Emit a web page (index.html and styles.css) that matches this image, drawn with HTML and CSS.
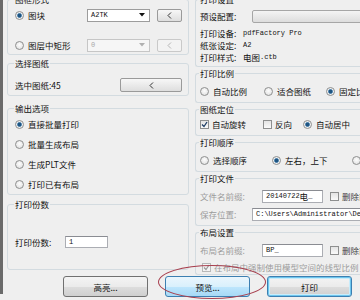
FILE: index.html
```html
<!DOCTYPE html>
<html lang="zh-CN">
<head>
  <meta charset="UTF-8" />
  <title>批量打印</title>
  <link rel="stylesheet" href="styles.css">
</head>
<body>
  <div class="dialog">
    <div class="panes">
      <!-- 左侧 -->
      <div class="pane">
        <fieldset class="grp b1">
          <legend>图框形式</legend>
          <div class="row">
            <span class="opt w72"><i class="radio on"></i>图块</span>
            <span class="combo"><span class="mono">A2TK</span><svg class="arrow" width="6" height="4" viewBox="0 0 6 4"><path d="M0 0H6L3 3.5Z" fill="#111"/></svg></span>
            <button class="pick"><svg width="5" height="7" viewBox="0 0 5 7"><path d="M4 .5 1 3.5 4 6.5" fill="none" stroke="#333"/></svg></button>
          </div>
          <div class="row next">
            <span class="opt w72"><i class="radio"></i>图层中矩形</span>
            <span class="combo off"><span class="mono">0</span><svg class="arrow" width="6" height="4" viewBox="0 0 6 4"><path d="M0 0H6L3 3.5Z" fill="#b0b0b0"/></svg></span>
            <button class="pick off"><svg width="5" height="7" viewBox="0 0 5 7"><path d="M4 .5 1 3.5 4 6.5" fill="none" stroke="#b5b5b5"/></svg></button>
          </div>
        </fieldset>

        <fieldset class="grp b2">
          <legend>选择图纸</legend>
          <div class="row">
            <span>选中图纸:45</span>
            <button class="pick wide"><svg width="5" height="7" viewBox="0 0 5 7"><path d="M4 .5 1 3.5 4 6.5" fill="none" stroke="#333"/></svg></button>
          </div>
        </fieldset>

        <fieldset class="grp b3">
          <legend>输出选项</legend>
          <div class="row tall"><span class="opt"><i class="radio on"></i>直接批量打印</span></div>
          <div class="row tall"><span class="opt"><i class="radio"></i>批量生成布局</span></div>
          <div class="row tall"><span class="opt"><i class="radio"></i>生成PLT文件</span></div>
          <div class="row tall"><span class="opt"><i class="radio"></i>打印已有布局</span></div>
        </fieldset>

        <fieldset class="grp b4">
          <legend>打印份数</legend>
          <div class="row">
            <span class="lbl w50">打印份数:</span>
            <span class="field copies"><span class="mono">1</span></span>
          </div>
        </fieldset>
      </div>

      <!-- 右侧 -->
      <div class="pane">
        <fieldset class="grp r r1">
          <legend>打印设置</legend>
          <div class="row">
            <span class="lbl w52">预设配置:</span>
            <span class="preset"></span>
          </div>
          <div class="info first"><span class="lbl w43">打印设备:</span><span class="mono">pdfFactory Pro</span></div>
          <div class="info"><span class="lbl w43">纸张设定:</span><span class="mono">A2</span></div>
          <div class="info"><span class="lbl w43">打印样式:</span>电图<span class="mono">.ctb</span></div>
        </fieldset>

        <fieldset class="grp r r2">
          <legend>打印比例</legend>
          <div class="row">
            <span class="opt w64"><i class="radio"></i>自动比例</span>
            <span class="opt w62"><i class="radio"></i>适合图纸</span>
            <span class="opt"><i class="radio on"></i>固定比例</span>
          </div>
        </fieldset>

        <fieldset class="grp r r3">
          <legend>图纸定位</legend>
          <div class="row short">
            <span class="opt w63"><i class="check"><svg width="7" height="7" viewBox="0 0 7 7"><path d="M1 3.5 3 5.5 6 1" fill="none" stroke="#1f3f66" stroke-width="1.3"/></svg></i>自动旋转</span>
            <span class="opt w40"><i class="check"></i>反向</span>
            <span class="opt"><i class="radio on"></i>自动居中</span>
          </div>
        </fieldset>

        <fieldset class="grp r r4">
          <legend>打印顺序</legend>
          <div class="row short">
            <span class="opt w72"><i class="radio"></i>选择顺序</span>
            <span class="opt w80"><i class="radio on"></i>左右，上下</span>
            <span class="opt"><i class="radio"></i>上下，左右</span>
          </div>
        </fieldset>

        <fieldset class="grp r r5">
          <legend>打印文件</legend>
          <div class="row">
            <span class="lbl w62 dim">文件名前缀:</span>
            <span class="field prefix"><span class="mono">20140722</span>电<span class="mono">_</span></span>
            <span class="opt del"><i class="check"></i>删除前缀</span>
          </div>
          <div class="row next">
            <span class="lbl w52 dim">保存位置:</span>
            <span class="field path"><span class="mono">C:\Users\Administrator\Desktop</span></span>
          </div>
        </fieldset>

        <fieldset class="grp r r6">
          <legend>布局设置</legend>
          <div class="row">
            <span class="lbl w62 dim">布局名前缀:</span>
            <span class="field prefix"><span class="mono">BP_</span></span>
            <span class="opt del"><i class="check"></i>删除前缀</span>
          </div>
          <div class="info last">
            <span class="opt dim"><i class="check off"><svg width="7" height="7" viewBox="0 0 7 7"><path d="M1 3.5 3 5.5 6 1" fill="none" stroke="#9a9a9a" stroke-width="1.2"/></svg></i>在布局中强制使用模型空间的线型比例</span>
          </div>
        </fieldset>
      </div>
    </div>

    <div class="actions">
      <button class="btn">高亮...</button>
      <button class="btn hover">预览...</button>
      <button class="btn default">打印</button>
    </div>

    <div class="mark"></div>
  </div>
</body>
</html>
```

FILE: styles.css
```css
html, body {
  margin: 0;
  width: 360px;
  height: 300px;
  overflow: hidden;
}
body {
  background: #efefef;
  font-family: "Noto Sans CJK SC", sans-serif;
  font-size: 8.5px;
  color: #111;
}
.dialog {
  position: relative;
  width: 470px;
  height: 300px;
  padding-left: 4px;
  border-left: 3px solid #6a6a6a;
}
.panes {
  display: grid;
  grid-template-columns: 182px 240px;
  column-gap: 6px;
  align-items: start;
  margin-top: -6px;
}
.pane {
  display: flex;
  flex-direction: column;
}
.mono {
  font-family: "Liberation Mono", "Noto Sans CJK SC", monospace;
  font-size: 7px;
}

/* group boxes */
.grp {
  margin: 0;
  min-width: 0;
  border: 1px solid #d3dbe0;
  border-radius: 3px;
  padding: 0 6px 0 7px;
}
.grp.r {
  padding-left: 4px;
  padding-right: 0;
  border-right: none;
}
.grp legend {
  padding: 0 1px;
  margin-left: -1px;
  height: 10px;
  line-height: 10px;
}
.b1 { padding-top: 3px; padding-bottom: 1px; }
.b2 { margin-top: 3px; padding-top: 9px; padding-bottom: 2px; }
.b3 { margin-top: 7px; padding-top: 1px; padding-bottom: 0; }
.b4 { margin-top: 4px; padding-top: 25px; padding-bottom: 19px; }
.r1 { padding-top: 4px; padding-bottom: 3px; }
.r2 { margin-top: 1px; padding-top: 5px; padding-bottom: 3px; }
.r3 { margin-top: 1px; padding-top: 3px; padding-bottom: 4px; }
.r4 { margin-top: 1px; padding-top: 6px; padding-bottom: 4px; }
.r5 { margin-top: 1px; padding-top: 5px; padding-bottom: 3px; }
.r6 { margin-top: 1px; padding-top: 5px; padding-bottom: 1px; }

/* rows */
.row {
  display: flex;
  align-items: center;
  height: 16px;
  white-space: nowrap;
}
.row.next { margin-top: 14px; }
.r5 .row.next { margin-top: 2px; }
.row.tall { height: 20px; }
.row.short { height: 14px; }
.info {
  display: flex;
  align-items: center;
  height: 12px;
  white-space: nowrap;
}
.info.first { margin-top: 3px; }
.info.last { margin-top: 3px; }
.lbl { flex: none; }
.dim { color: #9c9c9c; }
.w43 { width: 43px; }
.w50 { width: 50px; }
.w52 { width: 52px; }
.w62 { width: 62px; }
.w63 { width: 63px; }
.w64 { width: 64px; }
.w40 { width: 40px; }
.w72 { width: 72px; }
.w80 { width: 80px; }

.opt {
  display: flex;
  align-items: center;
  flex: none;
}
.opt.dim { margin-left: 2px; }
.opt.del { margin-left: 7px; color: #444; }

/* radio / check */
.radio {
  flex: none;
  width: 7px;
  height: 7px;
  margin-right: 4px;
  border: 1px solid #8e8f8f;
  border-radius: 50%;
  background: radial-gradient(circle at 50% 40%, #fdfdfd, #dcdcdc);
}
.radio.on {
  background: radial-gradient(circle, #1f5582 0 1.6px, #6f9cc0 2.2px, #f0f0f0 2.8px);
}
.check {
  flex: none;
  display: flex;
  align-items: center;
  justify-content: center;
  width: 7px;
  height: 7px;
  margin-right: 3px;
  border: 1px solid #8e8f8f;
  background: linear-gradient(#e4e4e4, #fafafa);
}
.check.off {
  border-color: #b8b8b8;
  background: #f4f4f4;
}

/* combos, fields, small buttons */
.combo {
  flex: none;
  display: flex;
  align-items: center;
  justify-content: space-between;
  box-sizing: border-box;
  width: 63px;
  height: 13px;
  padding: 0 4px 0 3px;
  border: 1px solid #9c9c9c;
  background: #fff;
}
.combo.off {
  border-color: #c6c6c6;
  background: #f6f6f6;
  color: #a8a8a8;
}
.pick {
  flex: none;
  display: flex;
  align-items: center;
  justify-content: center;
  box-sizing: border-box;
  width: 25px;
  height: 13px;
  margin-left: 7px;
  padding: 0;
  border: 1px solid #9a9a9a;
  border-radius: 2px;
  background: linear-gradient(#f7f7f7, #dedede);
}
.pick.off {
  border-color: #c9c9c9;
  background: #f3f3f3;
}
.pick.wide {
  width: 62px;
  height: 14px;
  margin-left: auto;
}
.field {
  flex: none;
  display: flex;
  align-items: center;
  box-sizing: border-box;
  height: 13px;
  padding-left: 3px;
  border: 1px solid #abadb3;
  border-top-color: #8a8c92;
  background: #fff;
  overflow: hidden;
}
.copies { width: 43px; height: 12px; }
.prefix { width: 61px; }
.path { width: 200px; }
.preset {
  flex: none;
  box-sizing: border-box;
  width: 200px;
  height: 13px;
  border: 1px solid #a6a6a6;
  border-radius: 2px;
  background: linear-gradient(#f4f4f4, #dddddd);
}

/* bottom buttons */
.actions {
  display: flex;
  gap: 17px;
  margin-top: 1px;
  padding-left: 56px;
}
.btn {
  box-sizing: border-box;
  width: 85px;
  height: 21px;
  padding: 0;
  border: 1px solid #707070;
  border-radius: 3px;
  background: linear-gradient(#f4f4f4 0, #ebebeb 50%, #dddddd 51%, #cfcfcf 100%);
  font-family: "Noto Sans CJK SC", sans-serif;
  font-size: 8.5px;
  color: #111;
}
.btn.hover {
  border-color: #3c7fb1;
  background: linear-gradient(#eaf6fd 0, #d9f0fc 50%, #bee6fd 51%, #a7d9f5 100%);
}
.btn.default {
  border-color: #3c7fb1;
  box-shadow: inset 0 0 0 1px #6ec6ee, inset 0 0 0 2px #c8ecfb;
}

/* red circle drawn over the preview button */
.mark {
  position: absolute;
  left: 155px;
  top: 271px;
  width: 106px;
  height: 32px;
  border: 1.5px solid #a8404f;
  border-radius: 50%;
}
```
